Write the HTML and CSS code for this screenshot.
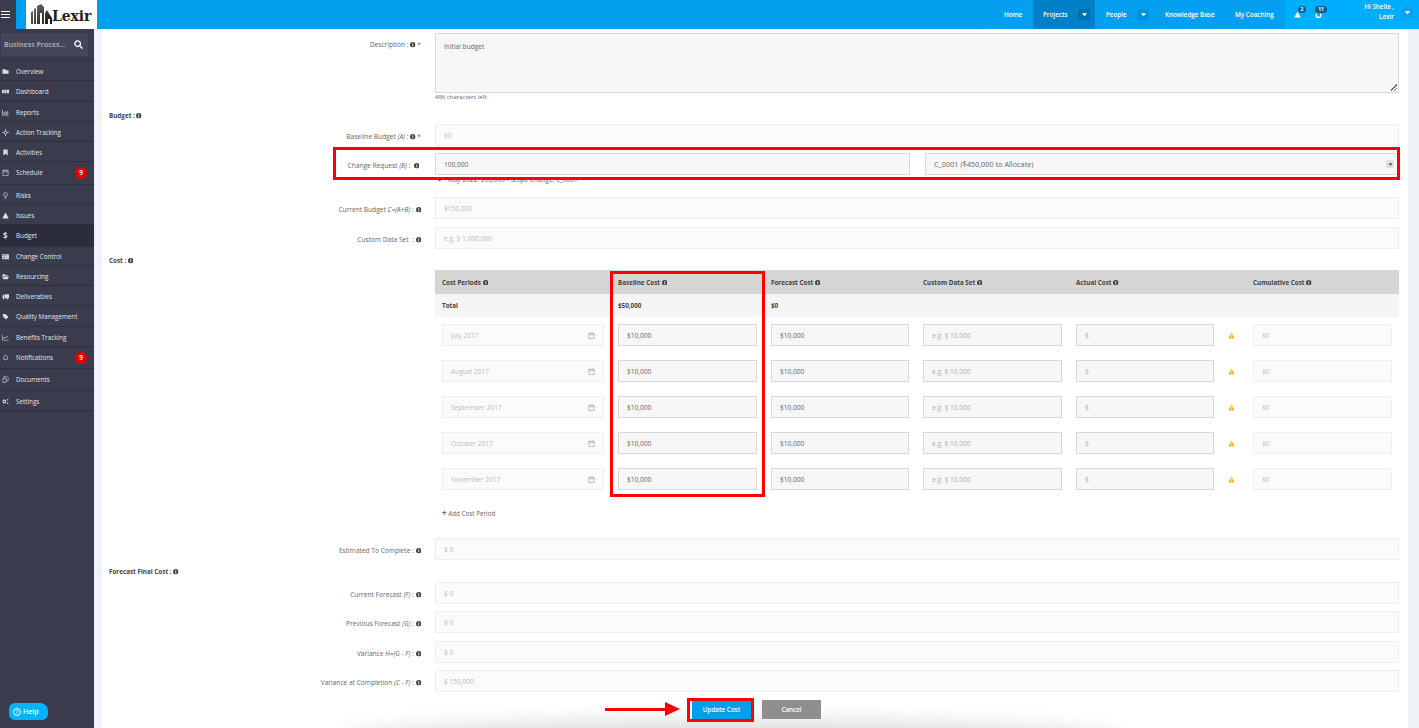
FILE: index.html
```html
<!DOCTYPE html>
<html lang="en">
<head>
<meta charset="utf-8">
<title>Lexir - Update Cost</title>
<link rel="stylesheet" href="styles.css">
</head>
<body>
<svg class="defs" width="0" height="0" aria-hidden="true">
  <symbol id="info" viewBox="0 0 16 16"><circle cx="8" cy="8" r="8" fill="currentColor"/><rect x="6.8" y="6.6" width="2.6" height="6" fill="#fff"/><rect x="6.8" y="3" width="2.6" height="2.4" fill="#fff"/></symbol>
  <symbol id="cal" viewBox="0 0 16 16"><path d="M2 3h12v12H2zM2 6.500h12M5 1v3M11 1v3" fill="none" stroke="currentColor" stroke-width="1.4"/></symbol>
  <symbol id="warn" viewBox="0 0 16 16"><path d="M8 1l7.500 14H.5z" fill="currentColor"/><rect x="7.200" y="5.800" width="1.600" height="5" fill="#fff"/><rect x="7.200" y="11.600" width="1.600" height="1.600" fill="#fff"/></symbol>
  <symbol id="caret" viewBox="0 0 8 8"><path d="M1 2.500h6L4 6z" fill="currentColor"/></symbol>
</svg>
<header class="topbar">
  <div class="burger"><span></span><span></span><span></span></div>
  <div class="logo">
    <svg class="logo-mark" viewBox="0 0 21 21" width="21" height="21" aria-hidden="true">
      <defs><linearGradient id="bld" x1="0" y1="0" x2="1" y2="1"><stop offset="0" stop-color="#777"/><stop offset="1" stop-color="#111"/></linearGradient></defs>
      <path d="M0 20V8l2-1v13zM3 20V5l2-1v16zM6 20V2l4-2 3 3v17h-2V9H9v11zM14 20V9l2-3 3 5 2 3v6h-2v-5h-2v5z" fill="url(#bld)"/>
    </svg>
    <span class="logo-text">Lexir</span>
  </div>
  <nav class="nav">
    <a class="nav-item nav-home">Home</a>
    <a class="nav-item nav-projects active">Projects<span class="drop"><svg width="7" height="7"><use href="#caret"/></svg></span></a>
    <a class="nav-item nav-people">People<span class="drop"><svg width="7" height="7"><use href="#caret"/></svg></span></a>
    <a class="nav-item nav-kb">Knowledge Base</a>
    <a class="nav-item nav-coach">My Coaching</a>
  </nav>
  <div class="tools">
    <div class="tool tool-a"><svg width="7" height="7"><use href="#warn"/></svg><span class="pill pill-a">2</span></div>
    <div class="tool tool-b"><svg width="7" height="7" viewBox="0 0 16 16"><path d="M3 6v4a5 5 0 0 0 10 0V6" fill="none" stroke="currentColor" stroke-width="3.4"/></svg><span class="pill pill-b">11</span></div>
    <div class="user"><span>Hi Sheila ,</span><span>Lexir</span></div>
    <span class="drop drop-user"><svg width="7" height="7"><use href="#caret"/></svg></span>
  </div>
</header>

<div class="layout">
  <aside class="sidebar">
    <div class="search-wrap"><div class="search"><span class="search-text">Business Proces...</span><svg width="9" height="9" viewBox="0 0 16 16"><circle cx="6.500" cy="6.500" r="5" fill="none" stroke="#fff" stroke-width="2.4"/><path d="M10.500 10.500L15 15" stroke="#fff" stroke-width="2.6"/></svg></div></div>
    <ul class="menu">
      <li class="mi"><svg class="mi-ic" viewBox="0 0 16 16"><path d="M1 3h7l1 2h6v8H1z" fill="currentColor"/></svg>Overview</li>
      <li class="mi h21"><svg class="mi-ic" viewBox="0 0 16 16"><path d="M0 4h16v8H0z" fill="currentColor"/><path d="M5 4v8M10 4v8" stroke="#3a3c4e"/></svg>Dashboard</li>
      <li class="mi"><svg class="mi-ic" viewBox="0 0 16 16"><path d="M1 2v12h14M4 12V8M7 12V5M10 12V7M13 12V4" fill="none" stroke="currentColor" stroke-width="1.6"/></svg>Reports</li>
      <li class="mi"><svg class="mi-ic" viewBox="0 0 16 16"><circle cx="8" cy="8" r="3.500" fill="none" stroke="currentColor" stroke-width="2"/><path d="M8 0v4M8 12v4M0 8h4M12 8h4" stroke="currentColor" stroke-width="1.6"/></svg>Action Tracking</li>
      <li class="mi"><svg class="mi-ic" viewBox="0 0 16 16"><path d="M3 1h10v14l-5-4-5 4z" fill="currentColor"/></svg>Activities</li>
      <li class="mi h23"><svg class="mi-ic" viewBox="0 0 16 16"><use href="#cal"/></svg>Schedule<span class="badge">9</span></li>
      <li class="mi"><svg class="mi-ic" viewBox="0 0 16 16"><circle cx="8" cy="6" r="4.200" fill="none" stroke="currentColor" stroke-width="1.6"/><path d="M6 12h4M6.500 14.500h3" stroke="currentColor" stroke-width="1.6"/></svg>Risks</li>
      <li class="mi"><svg class="mi-ic" viewBox="0 0 16 16"><use href="#warn"/></svg>Issues</li>
      <li class="mi current"><span class="mi-ic mi-dollar">$</span>Budget</li>
      <li class="mi h19"><svg class="mi-ic" viewBox="0 0 16 16"><path d="M0 3h16v3H0zM0 7h16v3H0zM0 11h16v3H0z" fill="currentColor"/><path d="M5 3v11" stroke="#3a3c4e"/></svg>Change Control</li>
      <li class="mi"><svg class="mi-ic" viewBox="0 0 16 16"><path d="M1 3h6l1 2h6v2H4l-3 6zM4.500 8H16l-3 6H1.500z" fill="currentColor"/></svg>Resourcing</li>
      <li class="mi"><svg class="mi-ic" viewBox="0 0 16 16"><path d="M6 3h10v9H6zM1 7l2-3h2v8H1z" fill="currentColor"/><circle cx="4" cy="13" r="1.600" fill="currentColor"/><circle cx="12" cy="13" r="1.600" fill="currentColor"/></svg>Deliverables</li>
      <li class="mi h21"><svg class="mi-ic" viewBox="0 0 16 16"><path d="M2 2h6l7 7-6 6-7-7z" fill="currentColor"/></svg>Quality Management</li>
      <li class="mi"><svg class="mi-ic" viewBox="0 0 16 16"><path d="M1 2v12h14" fill="none" stroke="currentColor" stroke-width="1.300"/><path d="M3 11l3-4 3 2 5-5" fill="none" stroke="currentColor" stroke-width="1.600"/></svg>Benefits Tracking</li>
      <li class="mi h22"><svg class="mi-ic" viewBox="0 0 16 16"><path d="M3 12c1-1 1-3 1-5a4 4 0 0 1 8 0c0 2 0 4 1 5zM7 14h2" fill="none" stroke="currentColor" stroke-width="1.400"/></svg>Notifications<span class="badge">9</span></li>
      <li class="mi h22"><svg class="mi-ic" viewBox="0 0 16 16"><path d="M5 5V1h6l3 3v7H9M2 5h7v10H2z" fill="none" stroke="currentColor" stroke-width="1.400"/></svg>Documents</li>
      <li class="mi"><svg class="mi-ic" viewBox="0 0 16 16"><circle cx="5.500" cy="8" r="3.200" fill="none" stroke="currentColor" stroke-width="2.400"/><circle cx="13" cy="4" r="1.800" fill="currentColor"/><circle cx="13" cy="12" r="1.800" fill="currentColor"/></svg>Settings</li>
    </ul>
  </aside>

  <main class="panel">
    <div class="row row-desc">
      <label class="lbl">Description : <svg class="i"><use href="#info"/></svg> *</label>
      <div class="field field-on area">Initial budget<span class="grip"></span></div>
    </div>
    <div class="hint">486 characters left</div>
    <h3 class="head head-budget">Budget : <svg class="i"><use href="#info"/></svg></h3>
    <div class="row mt4">
      <label class="lbl">Baseline Budget <em>(A)</em> : <svg class="i"><use href="#info"/></svg> *</label>
      <div class="field">$0</div>
    </div>
    <div class="row mt7">
      <label class="lbl">Change Request <em>(B)</em> : &nbsp;<svg class="i"><use href="#info"/></svg>&nbsp;</label>
      <div class="split">
        <div class="field field-on field-dark">100,000</div>
        <div class="field field-on field-dark select">C_0001 ($450,000 to Allocate)<span class="sel-btn"><svg width="5" height="5"><use href="#caret"/></svg></span></div>
      </div>
    </div>
    <div class="note"><span class="dot"></span><em>May 2022: $50,000 - Scope Change: C_0001</em></div>
    <div class="row">
      <label class="lbl">Current Budget <em>C=(A+B)</em> : <svg class="i"><use href="#info"/></svg></label>
      <div class="field">$150,000</div>
    </div>
    <div class="row mt8">
      <label class="lbl">Custom Data Set &nbsp;: <svg class="i"><use href="#info"/></svg></label>
      <div class="field">e.g. $ 1,000,000</div>
    </div>
    <h3 class="head head-cost">Cost : <svg class="i"><use href="#info"/></svg></h3>

    <div class="cost">
      <div class="c-row c-head">
        <div>Cost Periods <svg class="i"><use href="#info"/></svg></div>
        <div>Baseline Cost <svg class="i"><use href="#info"/></svg></div>
        <div>Forecast Cost <svg class="i"><use href="#info"/></svg></div>
        <div>Custom Data Set <svg class="i"><use href="#info"/></svg></div>
        <div>Actual Cost <svg class="i"><use href="#info"/></svg></div>
        <div>Cumulative Cost <svg class="i"><use href="#info"/></svg></div>
      </div>
      <div class="c-row c-total">
        <div>Total</div><div>$50,000</div><div>$0</div><div></div><div></div><div></div>
      </div>
      <div class="c-row c-line">
        <div class="field date">July 2017<svg class="cal"><use href="#cal"/></svg></div>
        <div class="field field-on field-dark">$10,000</div>
        <div class="field field-on field-dark">$10,000</div>
        <div class="field field-on">e.g. $ 10,000</div>
        <div class="act"><div class="field field-on">$</div><svg class="warn"><use href="#warn"/></svg></div>
        <div class="field">$0</div>
      </div>
      <div class="c-row c-line">
        <div class="field date">August 2017<svg class="cal"><use href="#cal"/></svg></div>
        <div class="field field-on field-dark">$10,000</div>
        <div class="field field-on field-dark">$10,000</div>
        <div class="field field-on">e.g. $ 10,000</div>
        <div class="act"><div class="field field-on">$</div><svg class="warn"><use href="#warn"/></svg></div>
        <div class="field">$0</div>
      </div>
      <div class="c-row c-line">
        <div class="field date">September 2017<svg class="cal"><use href="#cal"/></svg></div>
        <div class="field field-on field-dark">$10,000</div>
        <div class="field field-on field-dark">$10,000</div>
        <div class="field field-on">e.g. $ 10,000</div>
        <div class="act"><div class="field field-on">$</div><svg class="warn"><use href="#warn"/></svg></div>
        <div class="field">$0</div>
      </div>
      <div class="c-row c-line">
        <div class="field date">October 2017<svg class="cal"><use href="#cal"/></svg></div>
        <div class="field field-on field-dark">$10,000</div>
        <div class="field field-on field-dark">$10,000</div>
        <div class="field field-on">e.g. $ 10,000</div>
        <div class="act"><div class="field field-on">$</div><svg class="warn"><use href="#warn"/></svg></div>
        <div class="field">$0</div>
      </div>
      <div class="c-row c-line">
        <div class="field date">November 2017<svg class="cal"><use href="#cal"/></svg></div>
        <div class="field field-on field-dark">$10,000</div>
        <div class="field field-on field-dark">$10,000</div>
        <div class="field field-on">e.g. $ 10,000</div>
        <div class="act"><div class="field field-on">$</div><svg class="warn"><use href="#warn"/></svg></div>
        <div class="field">$0</div>
      </div>
    </div>
    <div class="add"><span class="plus">+</span> Add Cost Period</div>

    <div class="row mt20">
      <label class="lbl">Estimated To Complete : <svg class="i"><use href="#info"/></svg></label>
      <div class="field">$ 0</div>
    </div>
    <h3 class="head head-cost">Forecast Final Cost : <svg class="i"><use href="#info"/></svg></h3>
    <div class="row mt6">
      <label class="lbl">Current Forecast <em>(F)</em> : <svg class="i"><use href="#info"/></svg></label>
      <div class="field">$ 0</div>
    </div>
    <div class="row mt7">
      <label class="lbl">Previous Forecast <em>(G)</em> : <svg class="i"><use href="#info"/></svg></label>
      <div class="field">$ 0</div>
    </div>
    <div class="row mt8">
      <label class="lbl">Variance <em>H=(G - F)</em> : <svg class="i"><use href="#info"/></svg></label>
      <div class="field">$ 0</div>
    </div>
    <div class="row mt7">
      <label class="lbl">Variance at Completion <em>(C - F)</em> : <svg class="i"><use href="#info"/></svg></label>
      <div class="field">$ 150,000</div>
    </div>
    <div class="actions">
      <button class="btn btn-primary">Update Cost</button>
      <button class="btn btn-cancel">Cancel</button>
    </div>

    <div class="mark mark-change"></div>
    <div class="mark mark-baseline"></div>
    <div class="mark mark-update"></div>
    <div class="arrow"></div>
    <div class="floor-shadow"></div>
  </main>
</div>
<div class="help"><span class="help-ic">?</span> Help</div>
</body>
</html>
```

FILE: styles.css
```css
* { box-sizing: border-box; }
html, body { margin: 0; height: 728px; overflow: hidden; }
body { font-family: "Open Sans", "Liberation Sans", sans-serif; font-size: 6.3px; color: #555; background: #eff3f7; position: relative; }
.defs { position: absolute; }

/* Top bar */
.topbar { height: 29px; display: flex; background: #019eec; color: #fff; }
.burger { width: 16px; background: #3a3c4e; display: flex; flex-direction: column; justify-content: center; gap: 1.5px; padding: 0 6px 0 1px; margin-right: 10px; }
.burger span { height: 1.5px; background: #fff; }
.logo { width: 71px; background: #fff; display: flex; align-items: center; padding-left: 5px; }
.logo-text { font-family: "DejaVu Serif", "Liberation Serif", serif; font-weight: 700; font-size: 14px; color: #222; margin-left: 0; letter-spacing: -0.1px; padding-top: 3px; }
.nav { margin-left: auto; display: flex; background: #049ff0; }
.nav-item { display: flex; align-items: center; height: 29px; font-weight: 600; white-space: nowrap; }
.nav-home { width: 49px; padding-left: 20px; }
.nav-projects { width: 62px; padding: 0 5px 0 10px; }
.nav-people { width: 60px; padding: 0 6px 0 11px; }
.nav-kb { width: 70px; padding-left: 10px; }
.nav-coach { width: 60px; padding-left: 10px; }
.active { background: #0080c6; }
.drop { width: 12px; height: 11px; background: #0090dc; border-radius: 2px; display: flex; align-items: center; justify-content: center; flex: none; margin-left: auto; }
.active .drop { background: #006fae; }
.tools { width: 134px; background: #00aeff; display: flex; align-items: center; position: relative; }
.tool { position: absolute; top: 11px; }
.tool svg { display: block; color: #fff; }
.tool-a { left: 9px; }
.tool-b { left: 30px; }
.pill { position: absolute; background: #0b5f96; color: #fff; font-size: 5px; font-weight: 700; border-radius: 4px; height: 7px; line-height: 7px; text-align: center; top: -5px; }
.pill-a { left: 4px; width: 8px; }
.pill-b { left: 0; width: 12px; }
.user { position: absolute; right: 25px; top: 2px; display: flex; flex-direction: column; align-items: flex-end; font-weight: 600; line-height: 10px; }
.drop-user { position: absolute; right: 6px; top: 7px; height: 11px; background: #0fa0ec; }

/* Layout */
.layout { display: flex; height: 699px; }
.sidebar { width: 94px; background: #3a3c4e; color: #e3e3e8; flex: none; }
.search-wrap { height: 32px; padding: 4px 6px 4px 1px; border-bottom: 1px solid #2d2f3e; }
.search { height: 23px; background: #454659; display: flex; align-items: center; justify-content: space-between; padding: 0 5px 0 3px; }
.search-text { color: #a3a3ae; font-weight: 700; font-size: 7px; white-space: nowrap; }
.menu { list-style: none; margin: 0; padding: 0; }
.mi { height: 20px; display: flex; align-items: center; padding: 2px 0 0 2px; border-bottom: 1px solid #2d2f3e; position: relative; white-space: nowrap; }
.h19 { height: 19px; padding-top: 0; }
.h21 { height: 21px; padding-top: 0; }
.h22 { height: 22px; padding-top: 0; }
.h23 { height: 23px; padding-top: 0; padding-bottom: 2px; }
.mi-ic { width: 7px; height: 7px; margin-right: 7px; flex: none; color: #d9d9df; display: block; overflow: visible; }
.mi-dollar { font-weight: 700; font-size: 8px; line-height: 7px; padding-left: 1px; }
.current { background: #2b2d3c; height: 22px; padding-top: 0; }
.badge { position: absolute; right: 7px; top: 5px; width: 12px; height: 12px; border-radius: 50%; background: #e60000; color: #fff; font-size: 6.5px; font-weight: 600; line-height: 12px; text-align: center; }

/* Panel */
.panel { position: relative; width: 1306px; margin-left: 8px; background: #fff; padding: 4px 9px 0 0; }
.row { display: grid; grid-template-columns: 323px 1fr; column-gap: 10px; height: 22px; }
.row-desc { height: 60px; }
.mt4 { margin-top: 4px; }
.mt6 { margin-top: 6px; }
.mt7 { margin-top: 7px; }
.mt8 { margin-top: 8px; }
.mt20 { margin-top: 20px; }
.lbl { display: block; text-align: right; line-height: 26px; padding-right: 4px; white-space: nowrap; color: #666; font-size: 6.6px; }
.row-desc .lbl { line-height: 24px; }
em { font-style: italic; }
.i { width: 5.5px; height: 5.5px; color: #444; display: inline-block; vertical-align: -0.5px; }
.field { height: 22px; background: #fbfbfb; border: 1px solid #eeeeee; display: flex; align-items: center; padding: 0 8px; color: #bbb; position: relative; white-space: nowrap; min-width: 0; font-size: 6.6px; }
.field-on { background: #f7f7f7; border-color: #d8d8d8; }
.field-dark { color: #666; }
.area { height: 60px; align-items: flex-start; padding-top: 8px; color: #666; background: #f7f7f7; }
.grip { position: absolute; right: 1px; bottom: 1px; width: 7px; height: 7px; background: linear-gradient(135deg, transparent 50%, #666 50%, #666 58%, transparent 58%, transparent 72%, #666 72%, #666 80%, transparent 80%); }
.hint { height: 8px; line-height: 8px; margin-left: 333px; font-size: 6px; color: #666; }
.head { margin: 9px 0 0 7px; height: 10px; line-height: 11px; font-size: 6.3px; font-weight: 700; color: #444; }
.head-cost { margin-top: 6px; line-height: 12px; }
.split { display: grid; grid-template-columns: 475px 474px; column-gap: 15px; }
.select { padding-right: 0; font-size: 7.3px; }
.sel-btn { position: absolute; right: 4px; top: 6px; width: 8px; height: 8px; background: #e0e0e0; border-radius: 2px; color: #333; display: flex; align-items: center; justify-content: center; }
.note { height: 22px; padding-left: 333px; display: flex; align-items: flex-start; line-height: 10px; color: #666; font-size: 6.8px; }
.dot { width: 3px; height: 3px; border-radius: 50%; background: #444; margin: 3px 7px 0 3px; }

.cost { margin: 5px 0 0 333px; }
.c-row { display: grid; grid-template-columns: 176px 153px 152px 153px 177px 153px; }
.c-row > div { padding: 0 7px; }
.c-head { height: 24px; background: #d5d5d5; align-items: center; font-weight: 700; color: #444; }
.c-total { height: 23px; background: #f5f5f5; align-items: center; font-weight: 700; color: #444; }
.c-line { height: 36px; padding-top: 7px; }
.c-line > .field { margin: 0 7px; padding: 0 8px; }
.date { justify-content: space-between; }
.cal { width: 7px; height: 7px; color: #999; }
.c-line > .act { display: flex; align-items: center; padding: 0 0 0 7px; height: 22px; }
.act .field { width: 138px; flex: none; color: #b0b0b0; }
.warn { width: 7px; height: 7px; color: #f7b82a; margin-left: 14px; }
.c-line .field-on:not(.field-dark) { color: #b0b0b0; }
.add { margin: 11px 0 0 340px; height: 10px; line-height: 10px; color: #666; }
.plus { font-weight: 700; font-size: 8px; }

.actions { margin-top: 8px; margin-left: 588px; display: flex; gap: 11px; position: relative; z-index: 2; }
.btn { height: 19px; width: 61px; border: 0; font-family: inherit; font-size: 6.3px; color: #fff; padding: 0; font-weight: 600; }
.btn-primary { background: #019eec; border-left: 2px solid #fff; }
.btn-cancel { background: #8f8f8f; width: 59px; }

/* Annotations over the page */
.mark { position: absolute; border: 3px solid #f00; pointer-events: none; }
.mark-change { left: 231px; top: 118px; width: 1067px; height: 33px; }
.mark-baseline { left: 508px; top: 242px; width: 155px; height: 226px; }
.mark-update { left: 585px; top: 669px; width: 67px; height: 24px; z-index: 3; }
.arrow { position: absolute; left: 503px; top: 679px; width: 62px; height: 3px; background: #f00; }
.arrow::after { content: ""; position: absolute; left: 60px; top: -6px; border-left: 15px solid #f00; border-top: 7.5px solid transparent; border-bottom: 7.5px solid transparent; }
.floor-shadow { position: absolute; left: 240px; right: 290px; bottom: -30px; height: 30px; border-radius: 50%; box-shadow: 0 0 22px 6px rgba(0,0,0,.16); }

.help { position: absolute; left: 9px; top: 703px; width: 39px; height: 17px; background: #00b4ff; color: #fff; border-radius: 6px 8px 6px 6px; display: flex; align-items: center; padding-left: 4px; gap: 2px; font-size: 7px; font-weight: 600; }
.help-ic { width: 8px; height: 8px; border: 1px solid #fff; border-radius: 50%; font-size: 5px; line-height: 6px; text-align: center; }
```
